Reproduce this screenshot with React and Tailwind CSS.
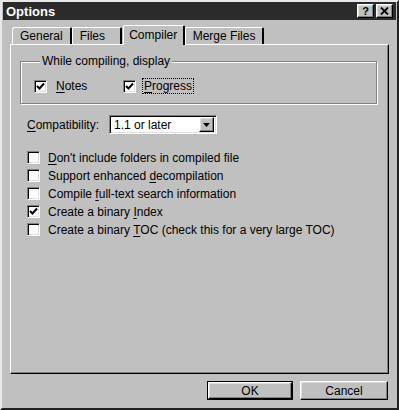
import React from 'react';

// ── Win95 bevels ──────────────────────────────────────────────────────────────
const RAISED = 'border-t border-l border-t-white border-l-white border-r border-b border-r-black border-b-black shadow-[inset_-1px_-1px_0_#808080,inset_1px_1px_0_#dfdfdf]';
const SUNKEN = 'border-t border-l border-t-[#808080] border-l-[#808080] border-r border-b border-r-white border-b-white shadow-[inset_1px_1px_0_#000,inset_-1px_-1px_0_#dfdfdf]';

function U({ children }) {
  return <span className="underline underline-offset-2">{children}</span>;
}

function CheckBox({ checked }) {
  return (
    <span className={`w-[13px] h-[13px] bg-white flex items-center justify-center flex-shrink-0 ${SUNKEN}`}>
      {checked && (
        <svg width="9" height="9" viewBox="0 0 9 9">
          <path d="M1 4 L3.5 6.5 L8 1.5" fill="none" stroke="#000" strokeWidth="2" />
        </svg>
      )}
    </span>
  );
}

function Tab({ active, children, className = '' }) {
  if (active) {
    return (
      <div className={`relative z-10 -mb-px h-[20px] px-[6px] flex items-start pt-[2px] bg-[#c0c0c0]
                       border-t border-l border-white border-r-2 border-r-black rounded-t-[2px] ${className}`}>
        {children}
      </div>
    );
  }
  return (
    <div className={`h-[17px] mt-[2px] px-[7px] flex items-center bg-[#c0c0c0]
                     border-t border-l border-white border-r-2 border-r-black rounded-t-[2px] ${className}`}>
      {children}
    </div>
  );
}

const OPTIONS = [
  { checked: false, label: <><U>D</U>on't include folders in compiled file</> },
  { checked: false, label: <>Support enhanced <U>d</U>ecompilation</> },
  { checked: false, label: <>Compile <U>f</U>ull-text search information</> },
  { checked: true,  label: <>Create a binary <U>I</U>ndex</> },
  { checked: false, label: <>Create a binary <U>T</U>OC (check this for a very large TOC)</> },
];

export default function App() {
  return (
    <div className="w-[399px] h-[410px] bg-[#c0c0c0] text-black text-[12px] leading-[14px]
                    font-['Liberation_Sans',Arial,sans-serif] border-t-2 border-l-2 border-t-[#e8e8e8] border-l-[#e8e8e8]
                    border-r-2 border-b-2 border-r-[#202020] border-b-[#202020] flex flex-col">

      {/* Title bar */}
      <div className="h-[18px] mx-[1px] bg-[#2b2b2b] flex items-center justify-between pl-[3px] pr-[3px]">
        <span className="text-white font-bold text-[13px] leading-none">Options</span>
        <div className="flex items-center gap-[2px]">
          <div className={`w-[17px] h-[14px] bg-[#c0c0c0] flex items-center justify-center font-bold text-[11px] leading-none ${RAISED}`}>?</div>
          <div className={`w-[17px] h-[14px] bg-[#c0c0c0] flex items-center justify-center ${RAISED}`}>
            <svg width="9" height="8" viewBox="0 0 9 8">
              <path d="M1 0.5 L8 7.5 M8 0.5 L1 7.5" stroke="#000" strokeWidth="1.8" />
            </svg>
          </div>
        </div>
      </div>

      {/* Tabs */}
      <div className="flex items-end ml-[10px] mt-[5px] h-[19px]">
        <Tab className="rounded-tl-[3px]">General</Tab>
        <Tab className="w-[50px]">Files</Tab>
        <Tab active className="w-[62px] justify-center ml-[1px]">Compiler</Tab>
        <Tab>Merge Files</Tab>
      </div>

      {/* Panel */}
      <div className="ml-[8px] mr-[8px] h-[330px] bg-[#c0c0c0] border-t border-l border-white border-r border-b border-r-black border-b-black
                      shadow-[inset_-1px_-1px_0_#808080] pt-[9px] pl-[9px] pr-[11px] flex flex-col">

        {/* Group box */}
        <fieldset className="border border-[#808080] shadow-[1px_1px_0_#fff,inset_1px_1px_0_#fff] h-[50px] px-[13px] pt-[10px]">
          <legend className="ml-[6px] px-[2px] bg-[#c0c0c0]">While compiling, display</legend>
          <div className="flex items-center">
            <CheckBox checked />
            <span className="ml-[9px] w-[67px]"><U>N</U>otes</span>
            <CheckBox checked />
            <span className="ml-[6px] px-[1px] border border-dotted border-black"><U>P</U>rogress</span>
          </div>
        </fieldset>

        {/* Compatibility */}
        <div className="flex items-center mt-[11px] pl-[7px]">
          <span className="w-[82px]"><U>C</U>ompatibility:</span>
          <div className={`w-[108px] h-[19px] bg-white flex items-center justify-between pl-[4px] pr-[2px] ${SUNKEN}`}>
            <span>1.1 or later</span>
            <div className={`w-[15px] h-[15px] bg-[#c0c0c0] flex items-center justify-center ${RAISED}`}>
              <svg width="7" height="4" viewBox="0 0 7 4"><path d="M0 0 H7 L3.5 4 Z" fill="#000" /></svg>
            </div>
          </div>
        </div>

        {/* Options list */}
        <div className="flex flex-col gap-[5px] mt-[17px] pl-[7px]">
          {OPTIONS.map((o, i) => (
            <div key={i} className="flex items-center gap-[8px] h-[13px]">
              <CheckBox checked={o.checked} />
              <span>{o.label}</span>
            </div>
          ))}
        </div>
      </div>

      {/* Buttons */}
      <div className="flex justify-end gap-[7px] mt-[7px] mr-[9px]">
        <div className="border border-black">
          <div className={`w-[84px] h-[17px] flex items-center justify-center ${RAISED}`}>OK</div>
        </div>
        <div className={`w-[88px] h-[19px] flex items-center justify-center ${RAISED}`}>Cancel</div>
      </div>
    </div>
  );
}
